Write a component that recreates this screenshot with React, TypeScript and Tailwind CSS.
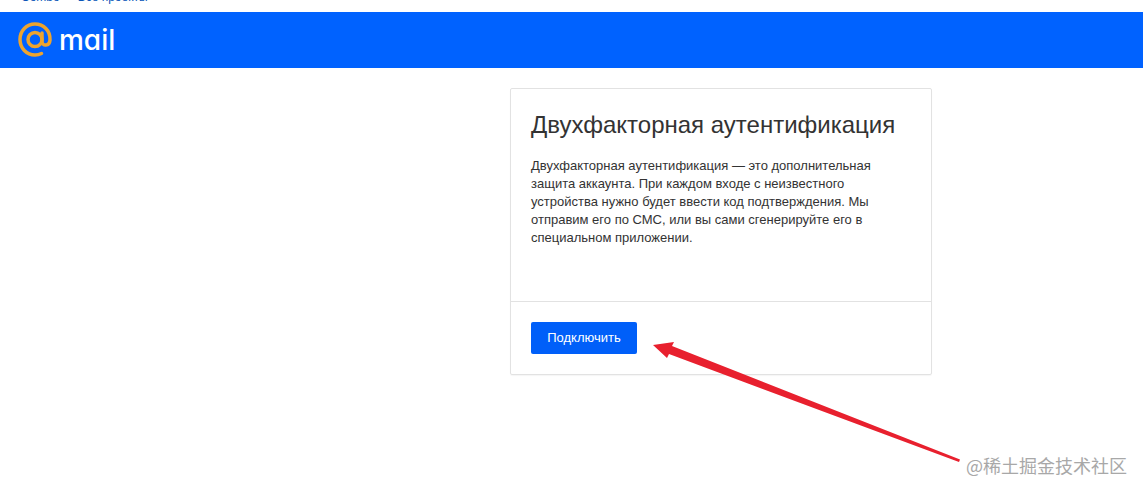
export default function App() {
  return (
    <div className="relative h-[492px] w-[1143px] overflow-hidden bg-white font-['Liberation_Sans',sans-serif]">
      {/* cropped breadcrumb */}
      <div className="flex h-3 items-start gap-[18px] overflow-hidden pl-[21px] text-xs leading-[14px] text-[#0b57b8]">
        <span className="-mt-[10px]">Combo</span>
        <span className="-mt-[10px]">Все проекты ›</span>
      </div>

      <header className="flex h-14 items-center bg-[#0062ff] pl-[18px]">
        <svg width="35" height="36" viewBox="0 0 35 36" fill="none" stroke="#eda42f" strokeWidth="3.5">
          <circle cx="17" cy="17.500" r="7" />
          <path d="M24 11v8.500c0 5 7.500 5 8-1.500C32.500 8.500 25.500 2 17 2 8.500 2 2 9 2 17.500S8.500 33 17 33c2.500 0 4.500-.5 6.500-1.500" strokeLinecap="round" />
        </svg>
        <span className="ml-[6px] font-['Inter',sans-serif] text-[28px] leading-none font-medium [font-feature-settings:'cv11'] text-white">mail</span>
      </header>

      <main className="flex justify-start pt-5 pl-[510px]">
        <section className="h-[287px] w-[422px] rounded-[2px] border border-[#e2e2e2] shadow-[0_1px_1px_rgba(0,0,0,0.04)]">
          <div className="h-[213px] border-b border-[#e2e2e2] px-5 pt-[20px]">
            <h1 className="text-[24px] leading-[32px] font-normal text-[#333333]">Двухфакторная аутентификация</h1>
            <p className="mt-4 w-[345px] text-[13px] leading-[18px] text-[#333333]">
              Двухфакторная аутентификация — это дополнительная защита аккаунта. При каждом входе с неизвестного устройства нужно будет ввести код подтверждения. Мы отправим его по СМС, или вы сами сгенерируйте его в специальном приложении.
            </p>
          </div>
          <div className="px-5 pt-5">
            <button className="h-[32px] w-[106px] rounded-[2px] bg-[#005ff9] text-[13px] text-white">Подключить</button>
          </div>
        </section>
      </main>

      {/* red annotation arrow */}
      <svg className="absolute top-0 left-0" width="1143" height="492" fill="none">
        <path d="M653 345 L674 342 L672 346 L960 459.500 L959 462 L669 354 L667 358 Z" fill="#e8202e" />
      </svg>
      <span className="absolute top-[454px] left-[966px] font-['Noto_Sans_CJK_SC',sans-serif] text-[18px] leading-[22px] text-[#a8a8a8]">@稀土掘金技术社区</span>
    </div>
  );
}
